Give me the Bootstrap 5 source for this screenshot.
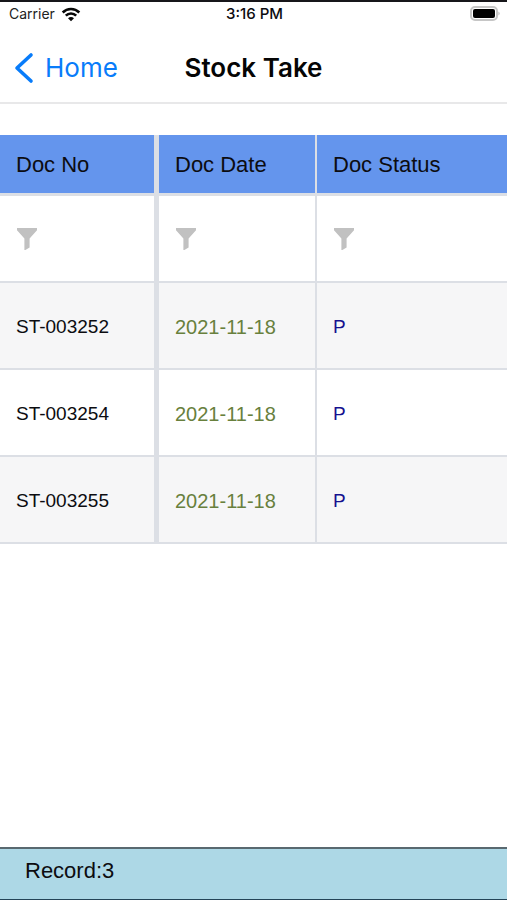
<!DOCTYPE html>
<html lang="en">
<head>
<meta charset="utf-8">
<meta name="viewport" content="width=device-width, initial-scale=1">
<title>Stock Take</title>
<link href="https://cdn.jsdelivr.net/npm/bootstrap@5.3.0/dist/css/bootstrap.min.css" rel="stylesheet">
<style>
body { font-family: "Liberation Sans", Arial, sans-serif; color: #0c0c10; }
.status-bar { border-top: 2px solid #17161a; height: 24px; padding: 0 7px 0 9px; font: 500 15px/24px Inter, sans-serif; }
.signal { gap: 6px; }
.carrier { font-weight: 400; font-size: 14px; color: #222; }
.title-bar { height: 80px; padding: 10px 14px 0; border-bottom: 2px solid #e8e8e9; font-family: Inter, sans-serif; font-size: 26px; line-height: 32px; }
.back-link { color: #087cfa; gap: 11px; }
.title-bar h1 { font-size: 26px; line-height: 32px; font-weight: 600; color: #050505; }
.grid-table { margin-top: 31px; table-layout: fixed; --line: #dcdfe5; border-collapse: separate; border-spacing: 0; font-size: 19px; line-height: 24px; }
.grid-table th, .grid-table td { padding: 3px 16px 0; border-bottom: 2px solid var(--line); vertical-align: middle; }
.grid-table th { padding-top: 1px; background: #6495ed; height: 61px; font-size: 22px; font-weight: 400; border-bottom-width: 3px; }
.grid-table td { height: 87px; }
.grid-table tr > :first-child { border-right: 5px solid var(--line); }
.grid-table tr > :nth-child(2) { border-right: 2px solid var(--line); }
.grid-table tbody tr:nth-child(odd) td { background: #f6f6f7; }
.col-no { width: 159px; }
.col-date { width: 158px; }
.grid-table .date-cell { color: #68803d; font-size: 20px; }
.grid-table .status-cell { color: #15108f; }
.grid-table .filter-row td { padding-top: 1px; }
.filter-btn { color: #c1c1c1; line-height: 0; }
.record-bar { height: 53px; padding: 0 25px; background: #add8e6; border-top: 2px solid #596970; border-bottom: 1px solid #244458; font-size: 22px; line-height: 44px; }
</style>
<script src="https://cdn.jsdelivr.net/npm/bootstrap@5.3.0/dist/js/bootstrap.bundle.min.js"></script>
</head>
<body class="bg-white">
<div class="d-flex flex-column min-vh-100">
  <div class="status-bar row g-0">
    <div class="signal col d-flex align-items-center"><span class="carrier">Carrier</span>
      <svg width="20" height="15" viewBox="0 0 20 15" fill="none" stroke="#080808" stroke-width="2.6" aria-hidden="true"><path d="M1.7 5.5C6.3.9 13.7.9 18.3 5.5M4.8 8.7c2.9-2.9 7.5-2.9 10.4 0"/><path d="M10 14.3l-3-3.1c1.7-1.6 4.3-1.6 6 0z" fill="#080808" stroke="none"/></svg>
    </div>
    <div class="col-auto">3:16 PM</div>
    <div class="col d-flex align-items-center justify-content-end">
      <svg width="30" height="16" viewBox="0 0 30 16" aria-label="Battery full" role="img"><rect x="1" y="1" width="26" height="13" rx="4" fill="#fff" stroke="#c6c6c6" stroke-width="2"/><rect x="3" y="3" width="22" height="9" rx="2"/><path d="M28.3 5.5c2 1 2 3 0 4z" fill="#c6c6c6"/></svg>
    </div>
  </div>
  <header class="title-bar row g-0 align-items-center">
    <div class="col d-flex"><a href="#" class="back-link d-flex align-items-center text-decoration-none"><svg width="20" height="32" viewBox="0 0 20 32" fill="none" stroke="currentColor" stroke-width="3.6" stroke-linecap="round" stroke-linejoin="round" aria-hidden="true"><path d="M17 3L3 16l14 13"/></svg>Home</a></div>
    <h1 class="col-auto mb-0">Stock Take</h1>
    <div class="col"></div>
  </header>
  <main class="flex-grow-1">
    <table class="grid-table w-100">
      <colgroup><col class="col-no"><col class="col-date"><col></colgroup>
      <thead>
        <tr><th scope="col">Doc No</th><th scope="col">Doc Date</th><th scope="col">Doc Status</th></tr>
        <tr class="filter-row">
          <td><button type="button" class="filter-btn btn p-0 border-0" aria-label="Filter Doc No"><svg width="22" height="24" viewBox="0 0 22 24" fill="currentColor"><path d="M1 1h20v2.2l-7.4 8.3v9.1L9.4 23H8.4V11.5L1 3.2z"/></svg></button></td>
          <td><button type="button" class="filter-btn btn p-0 border-0" aria-label="Filter Doc Date"><svg width="22" height="24" viewBox="0 0 22 24" fill="currentColor"><path d="M1 1h20v2.2l-7.4 8.3v9.1L9.4 23H8.4V11.5L1 3.2z"/></svg></button></td>
          <td><button type="button" class="filter-btn btn p-0 border-0" aria-label="Filter Doc Status"><svg width="22" height="24" viewBox="0 0 22 24" fill="currentColor"><path d="M1 1h20v2.2l-7.4 8.3v9.1L9.4 23H8.4V11.5L1 3.2z"/></svg></button></td>
        </tr>
      </thead>
      <tbody>
        <tr><td>ST-003252</td><td class="date-cell">2021-11-18</td><td class="status-cell">P</td></tr>
        <tr><td>ST-003254</td><td class="date-cell">2021-11-18</td><td class="status-cell">P</td></tr>
        <tr><td>ST-003255</td><td class="date-cell">2021-11-18</td><td class="status-cell">P</td></tr>
      </tbody>
    </table>
  </main>
  <footer class="record-bar">Record:3</footer>
</div>
</body>
</html>
